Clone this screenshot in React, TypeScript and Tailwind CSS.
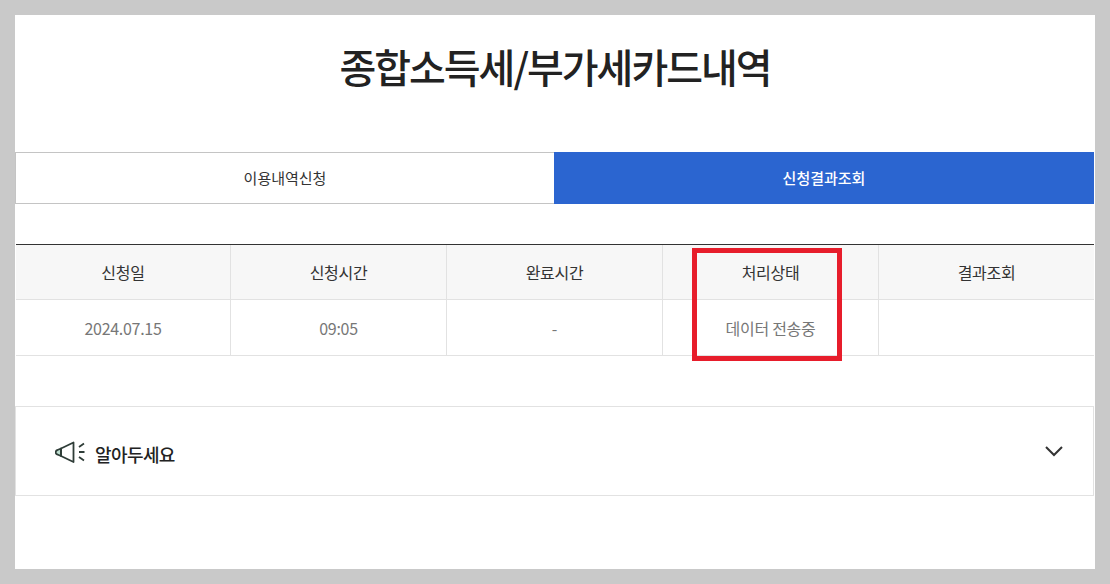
const font = "font-['Noto_Sans_CJK_KR','Noto_Sans',sans-serif]"

const headers = ['신청일', '신청시간', '완료시간', '처리상태', '결과조회']
const values = ['2024.07.15', '09:05', '-', '데이터 전송중', '']

function Megaphone() {
  return (
    <svg width="31" height="24" viewBox="0 0 31 24" fill="none" className="mt-px shrink-0">
      <path d="M6 8.5 L2.5 10 A2.3 2.3 0 0 0 2.5 14.5 L6 16 Z" fill="#bfe0d2" stroke="#2f3d38" strokeWidth="1.8" strokeLinejoin="round" />
      <path d="M6 8.5 L18.5 2.5 V22 L6 16 Z" stroke="#2f3d38" strokeWidth="1.8" strokeLinejoin="round" />
      <path d="M24 7 L29 3.5 M24 12 H29.5 M24 17 L29 20.5" stroke="#2f3d38" strokeWidth="1.8" />
    </svg>
  )
}

export default function App() {
  return (
    <div className={`${font} relative w-[1110px] h-[584px] overflow-hidden bg-[#c9c9c9] p-[15px]`}>
      <div className="h-[554px] bg-white">
        {/* Title */}
        <h1 className="h-[137px] pt-[21px] text-center text-[40px] leading-[60px] font-medium tracking-[-2px] text-[#222]">
          종합소득세/부가세카드내역
        </h1>

        {/* Tabs */}
        <div className="mr-px flex h-[52px] text-[15px] tracking-[0px]">
          <div className="flex w-[539px] items-center justify-center border border-r-0 border-[#c4c4c4] text-[#333]">
            이용내역신청
          </div>
          <div className="flex flex-1 items-center justify-center bg-[#2b65d0] font-medium text-white">
            신청결과조회
          </div>
        </div>

        {/* Result table */}
        <div className="mx-px mt-[40px] border-t border-[#333] text-[16px] tracking-[-0.3px]">
          <div className="grid h-[55px] grid-cols-[215px_216px_216px_216px_1fr] border-b border-[#e2e2e2] bg-[#f7f7f7] text-[#333]">
            {headers.map((h, i) => (
              <div key={h} className={`flex items-center justify-center ${i < 4 ? 'border-r border-[#e2e2e2]' : ''}`}>
                {h}
              </div>
            ))}
          </div>
          <div className="grid h-[56px] grid-cols-[215px_216px_216px_216px_1fr] border-b border-[#e2e2e2] text-[#777]">
            {values.map((v, i) => (
              <div key={i} className={`flex items-center justify-center pt-px ${i < 4 ? 'border-r border-[#e2e2e2]' : ''}`}>
                {v}
              </div>
            ))}
          </div>
        </div>

        {/* Notice accordion */}
        <div className="mt-[50px] mr-px flex h-[90px] items-center justify-between border border-[#e2e2e2] pr-[30px] pl-[39px]">
          <div className="flex items-center gap-[9px]">
            <Megaphone />
            <span className="pt-[7px] text-[18px] font-medium tracking-[-0.6px] text-[#222]">알아두세요</span>
          </div>
          <svg width="18" height="11" viewBox="0 0 18 11" fill="none" className="mt-px">
            <path d="M1 1 L9 9 L17 1" stroke="#333" strokeWidth="2" />
          </svg>
        </div>
      </div>

      {/* Red annotation box */}
      <div className="absolute top-[248px] left-[692px] h-[113px] w-[150px] border-[5px] border-[#e71d2b]" />
    </div>
  )
}
